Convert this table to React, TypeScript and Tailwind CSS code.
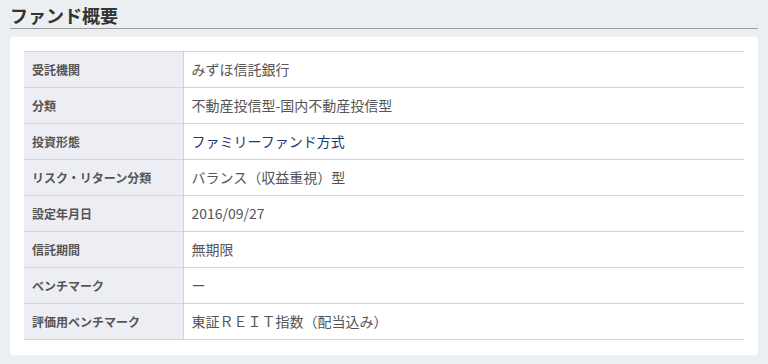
const rows: { label: string; value: string; tone?: "link" }[] = [
  { label: "受託機関", value: "みずほ信託銀行" },
  { label: "分類", value: "不動産投信型-国内不動産投信型" },
  { label: "投資形態", value: "ファミリーファンド方式", tone: "link" },
  { label: "リスク・リターン分類", value: "バランス（収益重視）型" },
  { label: "設定年月日", value: "2016/09/27" },
  { label: "信託期間", value: "無期限" },
  { label: "ベンチマーク", value: "ー" },
  { label: "評価用ベンチマーク", value: "東証ＲＥＩＴ指数（配当込み）" },
];

export default function App() {
  return (
    <div
      className="min-h-[364px] w-[768px] bg-[#eceff2] px-[10px]"
      style={{ fontFamily: '"Noto Sans CJK JP", "Noto Sans", sans-serif' }}
    >
      <h2 className="border-b border-[#9a9a9a] pt-[2px] text-[18px] font-bold leading-[26px] text-[#333333]">
        ファンド概要
      </h2>
      <div className="mt-[8px] rounded-[3px] bg-white px-[14px] pb-[15px] pt-[14px]">
        <table className="w-full border-collapse">
          <tbody>
            {rows.map((r) => (
              <tr key={r.label} className="h-[36px] border-y border-[#cfd5da]">
                <th className="w-[159px] border-r border-[#cfd5da] bg-[#edeef3] pl-[8px] text-left align-middle text-[12px] font-bold text-[#555555]">
                  {r.label}
                </th>
                <td
                  className={
                    r.tone === "link"
                      ? "pl-[8px] align-middle text-[14px] text-[#1d3b6e]"
                      : "pl-[8px] align-middle text-[14px] text-[#555555]"
                  }
                >
                  {r.value}
                </td>
              </tr>
            ))}
          </tbody>
        </table>
      </div>
    </div>
  );
}
